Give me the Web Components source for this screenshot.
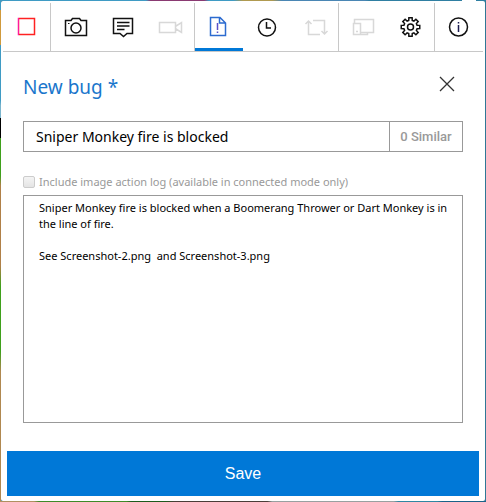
<!DOCTYPE html>
<html lang="en">
<head>
<meta charset="utf-8">
<title>New bug</title>
<style>
html, body { height: 100%; }
body {
  margin: 0;
  box-sizing: border-box;
  padding: 1px;
  font-family: "Segoe UI", "Noto Sans", "Open Sans", sans-serif;
  background:
    linear-gradient(90deg, #3f9bc4 0 5%, #3f9bc4 30%, #8a3a72 31% 42%, #3f9bc4 43% 48%, #b09a50 50% 56%, #4a86b4 58% 75%, #2f7fa2 76% 95%, #fff 95% 98%, #2f7fa2 98%) top / 100% 1px no-repeat,
    linear-gradient(90deg, #b09060 0 7%, #3f8a28 8% 26%, #1d5a1c 27% 34%, #4a3d38 36% 55%, #98a0a0 56% 81%, #2f86a2 82% 90%, #1a6288 91%) bottom / 100% 1px no-repeat,
    linear-gradient(#3f9bc4 0 2%, #d09a3c 2% 9%, #3f9bc4 9% 20%, #7ab4cc 21% 23.5%, #000 23.5% 27.5%, #3fa01c 27.5% 35%, #b08048 37% 53%, #3fa01c 57% 70%, #b08850 74%) left / 1px 100% no-repeat,
    #2f7896;
}
</style>
</head>
<body>
<bug-panel></bug-panel>

<script>
const gearPath = (() => {
  const pts = [];
  for (let i = 0; i < 8; i++) {
    for (const [d, r] of [[-15, 6.8], [-10, 9.4], [10, 9.4], [15, 6.8]]) {
      const a = (i * 45 + d) * Math.PI / 180;
      pts.push((23.5 + r * Math.cos(a)).toFixed(2) + ' ' + (24 + r * Math.sin(a)).toFixed(2));
    }
  }
  return 'M' + pts.join('L') + 'Z';
})();

const ICONS = {
  crop: '<defs><linearGradient id="g"><stop offset=".02" stop-color="#ff1a9c"/><stop offset=".06" stop-color="#f22"/></linearGradient></defs><rect x="15.5" y="15.5" width="16" height="16" stroke="url(#g)"/>',
  camera: '<path d="M14.5 17.5H20L21.5 15.5H28.5L30 17.5H35.5V32.5H14.5Z"/><circle cx="25" cy="25" r="5"/><path d="M17 20.5h1.5" stroke-width="1"/>',
  comment: '<path d="M14.5 15.5H33.5V30.5H28L24.5 33.5L21 30.5H14.5Z"/><path d="M18 19.5H30.5M18 23H30.5M18 26.5H25.5"/>',
  video: '<path d="M12.5 19.5H28.5V29.5H12.5Z M29 23L34.5 19.5V29.5L29 26"/>',
  bug: '<path d="M15.5 14.5H25L30.5 20V32.5H15.5Z M24.5 14.5V20H30.5" stroke="#2c6bd0"/><path d="M22.5 20V27M22.5 28.5V30" stroke="#5a50c8"/>',
  clock: '<circle cx="24" cy="24.5" r="8.5"/><path d="M23.5 19V25H28"/>',
  repeat: '<path d="M17.5 18V31.5H29 M14.5 21L17.5 18L20.5 21 M22 17.5H33.5V31 M30.5 28L33.5 31L36.5 28"/>',
  devices: '<path d="M15.5 20V16.5H34.5V29.5H22 M14.5 20.5H21.5V31.5H14.5Z M22 31.5H28.5V29.5 M17 28.5H19"/>',
  gear: '<path d="' + gearPath + '"/><circle cx="23.5" cy="24" r="3"/>',
  info: '<circle cx="23.5" cy="24" r="9"/><path d="M23.5 22V29M23.5 19V20.5" stroke="#1c1c50"/>'
};

class ToolButton extends HTMLElement {
  connectedCallback() {
    const root = this.attachShadow({ mode: 'open' });
    const off = this.hasAttribute('disabled');
    root.innerHTML = `
      <style>
        :host { display: block; flex: 1 1 10%; min-width: 0; height: 48px; box-sizing: border-box; color: #111; }
        :host([divider]) { border-right: 1px solid #c8c8c8; }
        :host([disabled]) { color: #d8d8d8; }
        :host([active]) { box-shadow: inset 0 -3px #0078d7; }
        button { all: unset; display: flex; width: 100%; height: 100%; color: inherit; }
        svg { flex: none; width: 48px; height: 48px; fill: none; stroke: currentColor; stroke-width: 1.5; }
      </style>
      <button type="button" aria-label="${this.getAttribute('label')}" ${off ? 'disabled' : ''}>
        <svg viewBox="0 0 48 48" aria-hidden="true">${ICONS[this.getAttribute('icon')]}</svg>
      </button>`;
  }
}
customElements.define('tool-button', ToolButton);

class ToolStrip extends HTMLElement {
  connectedCallback() {
    this.attachShadow({ mode: 'open' }).innerHTML = `
      <style>
        :host { display: flex; border-bottom: 1px solid #c8c8c8; }
      </style>
      <slot></slot>`;
  }
}
customElements.define('tool-strip', ToolStrip);

class BugForm extends HTMLElement {
  connectedCallback() {
    this.attachShadow({ mode: 'open' }).innerHTML = `
      <style>
        :host { display: flex; flex-direction: column; flex: 1; }
        * { box-sizing: border-box; }
        input, textarea, button { font-family: inherit; margin: 0; border-radius: 0; }
        .fields { flex: 1; display: flex; flex-direction: column; padding: 20px 20px 28px; }
        header { display: flex; justify-content: space-between; align-items: center; height: 30px; margin-bottom: 19px; }
        h1 { margin: 0; font-size: 19px; line-height: 30px; font-weight: 400; color: #1a76cc; }
        .close { border: 0; padding: 0; background: none; width: 32px; height: 30px; }
        .close svg { display: block; width: 32px; height: 24px; fill: none; stroke: #333; stroke-width: 1.3; }
        .title { display: flex; height: 31px; border: 1px solid #999; }
        .title input { flex: 1; min-width: 0; border: 0; padding: 0 12px; font-size: 14px; color: #000; background: #fff; outline: 0; }
        .similar { border: 0; border-left: 1px solid #999; background: #fff; width: 73px; padding: 0; font: 500 13px Roboto, Arial, sans-serif; color: #999; }
        .log { display: flex; align-items: center; gap: 4px; height: 16px; margin: 22px 0 5px; font-size: 11px; line-height: 16px; color: #999; white-space: nowrap; }
        .log input { appearance: none; flex: none; width: 12px; height: 12px; border: 1px solid #ccc; border-radius: 2px; background: linear-gradient(#f4f4f4, #e4e4e4); }
        textarea { display: block; flex: 1; width: 100%; min-height: 120px; border: 1px solid #999; padding: 4px 0 4px 15px; font-size: 11px; line-height: 16px; color: #000; resize: none; outline: 0; overflow: hidden; }
        .save { margin: 0 4px 3px; height: 45px; border: 0; background: #0078d7; color: #fff; font: 16px "Liberation Sans", Arial, sans-serif; }
      </style>
      <div class="fields">
        <header>
          <h1>New bug *</h1>
          <button class="close" type="button" aria-label="Close">
            <svg viewBox="0 0 32 24" aria-hidden="true"><path d="M9 2L23 16M23 2L9 16"/></svg>
          </button>
        </header>
        <div class="title">
          <input type="text" aria-label="Title" value="Sniper Monkey fire is blocked">
          <button class="similar" type="button">0 Similar</button>
        </div>
        <label class="log"><input type="checkbox" disabled>Include image action log (available in connected mode only)</label>
        <textarea aria-label="Description" spellcheck="false">Sniper Monkey fire is blocked when a Boomerang Thrower or Dart Monkey is in the line of fire.

See Screenshot-2.png  and Screenshot-3.png</textarea>
      </div>
      <button class="save" type="button">Save</button>`;
  }
}
customElements.define('bug-form', BugForm);

class BugPanel extends HTMLElement {
  connectedCallback() {
    this.attachShadow({ mode: 'open' }).innerHTML = `
      <style>
        :host { display: flex; flex-direction: column; box-sizing: border-box; height: 100%; padding: 2px; background: #fff; border-radius: 2px; }
      </style>
      <tool-strip>
        <tool-button icon="crop" label="Select region" divider></tool-button>
        <tool-button icon="camera" label="Capture screenshot"></tool-button>
        <tool-button icon="comment" label="Add note"></tool-button>
        <tool-button icon="video" label="Record screen" disabled divider></tool-button>
        <tool-button icon="bug" label="Create bug" active></tool-button>
        <tool-button icon="clock" label="Timeline"></tool-button>
        <tool-button icon="repeat" label="Replay" disabled divider></tool-button>
        <tool-button icon="devices" label="Devices" disabled></tool-button>
        <tool-button icon="gear" label="Settings" divider></tool-button>
        <tool-button icon="info" label="Information"></tool-button>
      </tool-strip>
      <bug-form></bug-form>`;
  }
}
customElements.define('bug-panel', BugPanel);
</script>
</body>
</html>
